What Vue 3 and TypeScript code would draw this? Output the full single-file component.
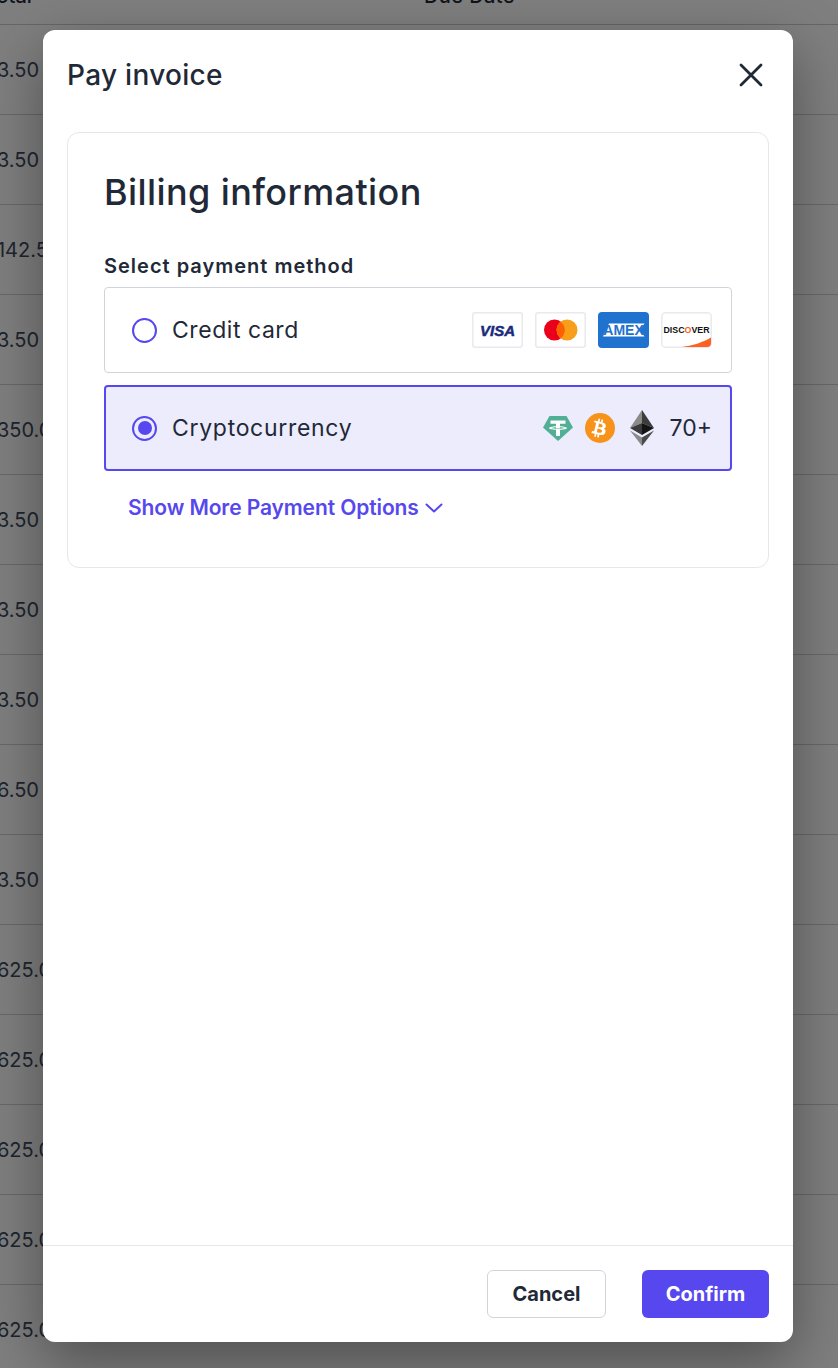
<script setup lang="ts">
interface Row { amount: string }
const amounts: string[] = ['$13.50','$13.50','$1142.50','$13.50','$1350.00','$13.50','$13.50','$13.50','$16.50','$13.50','$1625.00','$1625.00','$1625.00','$1625.00','$1625.00']
const rows: Row[] = amounts.map((amount) => ({ amount }))
</script>

<template>
  <div class="page">
    <div class="table">
      <div class="thead"><span class="th-total">Total</span><span class="th-due">Due Date</span></div>
      <div v-for="(r, i) in rows" :key="i" class="row"><span class="amount">{{ r.amount }}</span></div>
    </div>
    <div class="backdrop"></div>
    <section class="modal">
      <header class="modal-head">
        <h2 class="modal-title">Pay invoice</h2>
        <button class="close" aria-label="Close">
          <svg width="24" height="24" viewBox="0 0 24 24" fill="none" stroke="#1f2937" stroke-width="2.800" stroke-linecap="round"><path d="M2 2 22 22M22 2 2 22"/></svg>
        </button>
      </header>
      <div class="modal-body">
        <div class="card">
          <h3 class="card-title">Billing information</h3>
          <div class="label">Select payment method</div>
          <div class="option">
            <span class="radio"></span>
            <span class="opt-name">Credit card</span>
            <span class="brands">
              <svg class="brand" width="51" height="36" viewBox="0 0 51 36"><rect x=".75" y=".75" width="49.500" height="34.500" rx="2.500" fill="#fff" stroke="#e9e9ee" stroke-width="1.500"/><text x="25.500" y="23.500" text-anchor="middle" class="visa">VISA</text></svg>
              <svg class="brand" width="51" height="36" viewBox="0 0 51 36"><rect x=".75" y=".75" width="49.500" height="34.500" rx="2.500" fill="#fff" stroke="#e9e9ee" stroke-width="1.500"/><circle cx="19.500" cy="18" r="10.500" fill="#eb001b"/><circle cx="32" cy="18" r="10.500" fill="#f79e1b"/><path d="M25.750 9.700a10.500 10.500 0 0 1 0 16.600 10.500 10.500 0 0 1 0-16.600z" fill="#ff5f00"/></svg>
              <svg class="brand" width="51" height="36" viewBox="0 0 51 36"><rect width="51" height="36" rx="4" fill="#1f72cd"/><path d="M5 24.500 11 11.500H43L46.500 11.500 42 18 46.500 24.500H11z" fill="#fff"/><text x="25.500" y="23" text-anchor="middle" class="amex">AMEX</text></svg>
              <svg class="brand" width="51" height="36" viewBox="0 0 51 36"><rect x=".75" y=".75" width="49.500" height="34.500" rx="4" fill="#fff" stroke="#e9e9ee" stroke-width="1.500"/><path d="M50 25.500V31A4 4 0 0 1 46 35H21C33 33.500 42 30 50 25.500z" fill="#fd6020"/><text x="25.500" y="20.500" text-anchor="middle" class="disc">DISC<tspan fill="#fd6020">O</tspan>VER</text></svg>
            </span>
          </div>
          <div class="option selected">
            <span class="radio on"></span>
            <span class="opt-name crypto-name">Cryptocurrency</span>
            <span class="cryptos">
              <svg width="30" height="26" viewBox="0 0 30 26"><path d="M6.500 1H23.500L30 12.500 15 26 0 12.500z" fill="#50af95"/><path d="M7.500 5.500H22.500V8.800H17V11.200C21 11.400 24 12.100 24 13S21 14.600 17 14.800V21H13V14.800C9 14.600 6 13.900 6 13S9 11.400 13 11.200V8.800H7.500z" fill="#fff"/><path d="M8 13C9.500 13.500 12 13.700 15 13.700S20.500 13.500 22 13C20.500 12.500 18 12.300 17 12.300V13.300H13V12.300C12 12.300 9.500 12.500 8 13z" fill="#50af95"/></svg>
              <svg class="btc" width="30" height="30" viewBox="0 0 30 30"><circle cx="15" cy="15" r="15" fill="#f7931a"/><path d="M20.800 13.200c.3-2-1.200-3-3.300-3.700l.7-2.700-1.700-.4-.6 2.600-1.300-.3.600-2.700-1.600-.4-.7 2.700-1.100-.3-2.300-.6-.4 1.800s1.200.3 1.200.3c.7.200.8.600.8 1l-.8 3.100-1.100 4.300c-.1.200-.3.500-.8.400l-1.200-.3-.8 1.900 2.200.5 1.200.3-.7 2.800 1.600.4.700-2.700 1.300.3-.7 2.700 1.700.4.700-2.800c2.900.5 5 .3 5.900-2.300.7-2.100 0-3.300-1.500-4.100 1.100-.3 1.900-1 2.100-2.500zm-3.800 5.400c-.5 2.100-4 1-5.200.7l.9-3.700c1.200.3 4.800.9 4.300 3zm.5-5.400c-.5 1.900-3.400.9-4.300.7l.8-3.300c1 .2 4 .6 3.500 2.600z" fill="#fff"/></svg>
              <svg class="eth" width="24" height="36" viewBox="0 0 24 36"><path d="M12 0 0 18l12-5z" fill="#8a8a8a"/><path d="M12 0l12 18-12-5z" fill="#3c3c3c"/><path d="M0 18l12-5v12z" fill="#3a3a3a"/><path d="M24 18 12 13v12z" fill="#141414"/><path d="M0 20.500 12 27.500V36z" fill="#8a8a8a"/><path d="M24 20.500 12 27.500V36z" fill="#4a4a4a"/></svg>
              <span class="more">70+</span>
            </span>
          </div>
          <button class="show-more">
            Show More Payment Options
            <svg width="18" height="10" viewBox="0 0 18 10" fill="none" stroke="#5648ee" stroke-width="2" stroke-linecap="round" stroke-linejoin="round"><path d="M1.500 1.500 9 8.500 16.500 1.500"/></svg>
          </button>
        </div>
      </div>
      <footer class="modal-foot">
        <button class="btn cancel">Cancel</button>
        <button class="btn confirm">Confirm</button>
      </footer>
    </section>
  </div>
</template>

<style>
html, body { margin: 0; padding: 0; }
</style>

<style scoped>
.page { position: relative; width: 838px; height: 1368px; overflow: hidden; background: #fff; font-family: "Inter", "Liberation Sans", sans-serif; color: #1f2937; }
.table { margin-left: -24px; margin-top: -25px; }
.thead { height: 50px; border-bottom: 1px solid #ccc; position: relative; font-size: 20px; line-height: 36px; box-sizing: border-box; }
.th-total { position: absolute; left: 9px; top: 3px; font-weight: 500; }
.th-due { position: absolute; left: 448px; top: 3px; font-weight: 500; letter-spacing: .4px; }
.row { height: 90px; box-sizing: border-box; border-bottom: 1px solid #d0d0d0; display: flex; align-items: center; font-size: 20px; }
.amount { color: #3d4a5c; }
.backdrop { position: absolute; inset: 0; background: rgba(0, 0, 0, 0.5); }
.modal { position: absolute; left: 43px; top: 30px; width: 750px; height: 1312px; background: #fff; border-radius: 12px; display: flex; flex-direction: column; box-shadow: 0 20px 60px rgba(0, 0, 0, 0.38); }
.modal-head { height: 102px; display: flex; align-items: center; justify-content: space-between; padding: 0 30px 12px 24px; box-sizing: border-box; flex: none; }
.modal-title { margin: 0; font-size: 28px; font-weight: 500; line-height: 36px; letter-spacing: .3px; }
.close { padding: 0; border: 0; background: none; display: flex; }
.modal-body { flex: 1; padding: 0 24px; }
.card { border: 1px solid #e5e7eb; border-radius: 12px; padding: 36px 36px 36px; height: 436px; box-sizing: border-box; }
.card-title { margin: 0; font-size: 36px; line-height: 46px; font-weight: 500; letter-spacing: .4px; }
.label { margin-top: 37px; font-size: 20px; line-height: 28px; font-weight: 600; letter-spacing: 1px; }
.option { height: 86px; box-sizing: border-box; border: 1px solid #d1d5db; border-radius: 4px; display: flex; align-items: center; padding: 0 19px 0 27px; margin-top: 7px; }
.option + .option { margin-top: 12px; }
.option.selected { border: 2px solid #5648ee; background: #edecfd; padding-left: 26px; padding-right: 19px; }
.radio { width: 25px; height: 25px; box-sizing: border-box; border: 2.500px solid #5648ee; border-radius: 50%; display: flex; align-items: center; justify-content: center; flex: none; background: #fff; }
.radio.on { background: transparent; }
.radio.on::after { content: ""; width: 14px; height: 14px; border-radius: 50%; background: #5648ee; }
.opt-name { margin-left: 15px; font-size: 23px; flex: 1; letter-spacing: .55px; }
.crypto-name { letter-spacing: .7px; }
.brands { display: flex; gap: 12px; align-items: center; }
.brand { display: block; }
.visa { font: italic 700 15px "Liberation Sans", sans-serif; fill: #1a2a7a; stroke: #1a2a7a; stroke-width: .5px; }
.amex { font: 700 14px "Liberation Sans", sans-serif; fill: #1f72cd; }
.disc { font: 700 8.800px "Liberation Sans", sans-serif; fill: #111; }
.cryptos { display: flex; align-items: center; margin-right: -1px; }
.btc { margin-left: 12px; }
.eth { margin-left: 15px; }
.more { margin-left: 16px; font-size: 23px; }
.show-more { margin: 24px 0 0 24px; padding: 0; border: 0; background: none; color: #5648ee; font: 600 21px "Inter", sans-serif; letter-spacing: -.1px; display: flex; align-items: center; gap: 6px; }
.modal-foot { height: 97px; flex: none; box-sizing: border-box; border-top: 1px solid #e5e7eb; display: flex; align-items: center; justify-content: flex-end; gap: 36px; padding: 0 24px; }
.btn { height: 48px; border-radius: 6px; font: 700 20px "Inter", sans-serif; box-sizing: border-box; }
.cancel { width: 119px; background: #fff; border: 1px solid #d1d5db; color: #1f2937; }
.confirm { width: 127px; background: #5648ee; border: 0; color: #fff; }
</style>
